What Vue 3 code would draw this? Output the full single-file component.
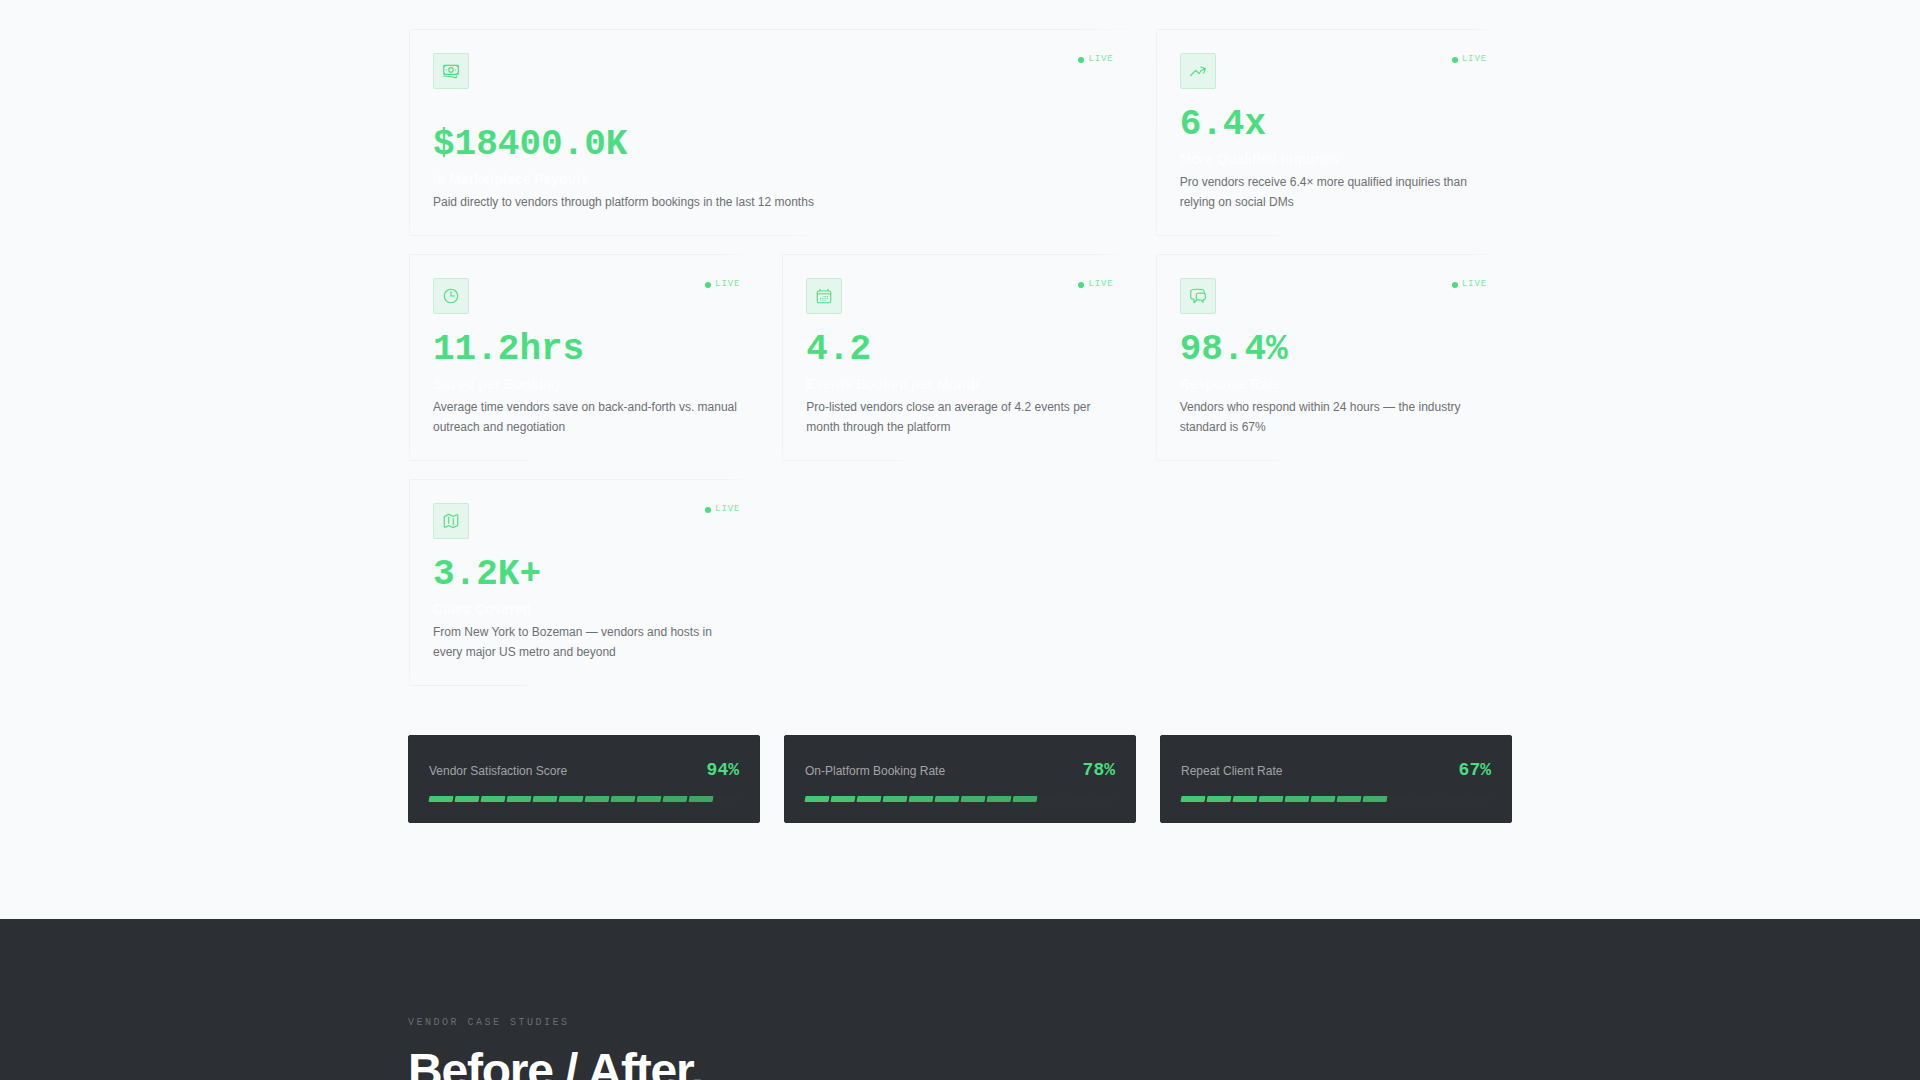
<script setup>
const metrics = [
  {
    value: '$18400.0K',
    title: 'in Marketplace Payouts',
    text: 'Paid directly to vendors through platform bookings in the last 12 months',
    wide: true,
    icon: 'M2.25 18.75a60.07 60.07 0 0 1 15.797 2.101c.727.198 1.453-.342 1.453-1.096V18.75M3.75 4.5v.75A.75.75 0 0 1 3 6h-.75m0 0v-.375c0-.621.504-1.125 1.125-1.125H20.25M2.25 6v9m18-10.5v.75c0 .414.336.75.75.75h.75m-1.5-1.5h.375c.621 0 1.125.504 1.125 1.125v9.75c0 .621-.504 1.125-1.125 1.125h-.375m1.5-1.5H21a.75.75 0 0 0-.75.75v.75m0 0H3.75m0 0h-.375a1.125 1.125 0 0 1-1.125-1.125V15m1.5 1.5v-.75A.75.75 0 0 0 3 15h-.75M15 10.5a3 3 0 1 1-6 0 3 3 0 0 1 6 0Zm3 0h.008v.008H18V10.5Zm-12 0h.008v.008H6V10.5Z',
  },
  {
    value: '6.4x',
    title: 'More Qualified Inquiries',
    text: 'Pro vendors receive 6.4× more qualified inquiries than relying on social DMs',
    icon: 'M2.25 18 9 11.25l4.306 4.306a11.95 11.95 0 0 1 5.814-5.518l2.74-1.22m0 0-5.94-2.281m5.94 2.28-2.28 5.941',
  },
  {
    value: '11.2hrs',
    title: 'Saved per Booking',
    text: 'Average time vendors save on back-and-forth vs. manual outreach and negotiation',
    icon: 'M12 6v6h4.5m4.5 0a9 9 0 1 1-18 0 9 9 0 0 1 18 0Z',
  },
  {
    value: '4.2',
    title: 'Events Booked per Month',
    text: 'Pro-listed vendors close an average of 4.2 events per month through the platform',
    icon: 'M6.75 3v2.25M17.25 3v2.25M3 18.75V7.5a2.25 2.25 0 0 1 2.25-2.25h13.5A2.25 2.25 0 0 1 21 7.5v11.25m-18 0A2.25 2.25 0 0 0 5.25 21h13.5A2.25 2.25 0 0 0 21 18.75m-18 0v-7.5A2.25 2.25 0 0 1 5.25 9h13.5A2.25 2.25 0 0 1 21 11.25v7.5m-9-6h.008v.008H12v-.008ZM12 15h.008v.008H12V15Zm0 2.25h.008v.008H12v-.008ZM9.75 15h.008v.008H9.75V15Zm0 2.25h.008v.008H9.75v-.008ZM7.5 15h.008v.008H7.5V15Zm0 2.25h.008v.008H7.5v-.008Zm6.75-4.5h.008v.008h-.008v-.008Zm0 2.25h.008v.008h-.008V15Zm0 2.25h.008v.008h-.008v-.008Zm2.25-4.5h.008v.008H16.5v-.008Zm0 2.25h.008v.008H16.5V15Z',
  },
  {
    value: '98.4%',
    title: 'Response Rate',
    text: 'Vendors who respond within 24 hours — the industry standard is 67%',
    icon: 'M20.25 8.511c.884.284 1.5 1.128 1.5 2.097v4.286c0 1.136-.847 2.1-1.98 2.193-.34.027-.68.052-1.02.072v3.091l-3-3c-1.354 0-2.694-.055-4.02-.163a2.115 2.115 0 0 1-.825-.242m9.345-8.334a2.126 2.126 0 0 0-.476-.095 48.64 48.64 0 0 0-8.048 0c-1.131.094-1.976 1.057-1.976 2.192v4.286c0 .837.46 1.58 1.155 1.951m9.345-8.334V6.637c0-1.621-1.152-3.026-2.76-3.235A48.455 48.455 0 0 0 11.25 3c-2.115 0-4.198.137-6.24.402-1.608.209-2.76 1.614-2.76 3.235v6.226c0 1.621 1.152 3.026 2.76 3.235.577.075 1.157.14 1.74.194V21l4.155-4.155',
  },
  {
    value: '3.2K+',
    title: 'Cities Covered',
    text: 'From New York to Bozeman — vendors and hosts in every major US metro and beyond',
    icon: 'M9 6.75V15m6-6v8.25m.503 3.498 4.875-2.437c.381-.19.622-.58.622-1.006V4.82c0-.836-.88-1.38-1.628-1.006l-3.869 1.934c-.317.159-.69.159-1.006 0L9.503 3.252a1.125 1.125 0 0 0-1.006 0L3.622 5.689C3.24 5.88 3 6.27 3 6.695V19.18c0 .836.88 1.38 1.628 1.006l3.869-1.934c.317-.159.69-.159 1.006 0l4.994 2.497c.317.158.69.158 1.006 0Z',
  },
]

const SEGMENTS = 12
const scores = [
  { label: 'Vendor Satisfaction Score', value: 94 },
  { label: 'On-Platform Booking Rate', value: 78 },
  { label: 'Repeat Client Rate', value: 67 },
]
const filled = (value) => Math.round((value / 100) * SEGMENTS)
const segmentOpacity = (n) => 0.87 - (n - 1) * 0.02
</script>

<template>
  <main>
    <section class="proof">
      <div class="container">
        <div class="metrics">
          <article v-for="m in metrics" :key="m.value" class="metric" :class="{ wide: m.wide }">
            <header class="metric-head">
              <span class="icon">
                <svg viewBox="0 0 24 24" aria-hidden="true"><path :d="m.icon" /></svg>
              </span>
              <span class="live"><i class="dot"></i><span class="live-text">LIVE</span></span>
            </header>
            <div>
              <p class="value">{{ m.value }}</p>
              <h3 class="title">{{ m.title }}</h3>
              <p class="text">{{ m.text }}</p>
            </div>
          </article>
        </div>

        <div class="scores">
          <article v-for="s in scores" :key="s.label" class="score">
            <div class="score-head">
              <span class="score-label">{{ s.label }}</span>
              <span class="score-value">{{ s.value }}%</span>
            </div>
            <div class="segments">
              <span
                v-for="n in SEGMENTS"
                :key="n"
                class="segment"
                :class="{ on: n <= filled(s.value) }"
                :style="n <= filled(s.value) ? { opacity: segmentOpacity(n) } : null"
              ></span>
            </div>
          </article>
        </div>
      </div>
    </section>

    <section class="cases">
      <div class="container">
        <p class="eyebrow">VENDOR CASE STUDIES</p>
        <h2 class="heading">Before / After.</h2>
      </div>
    </section>
  </main>
</template>

<style>
body {
  margin: 0;
  background: #f9fafb;
}
html {
  scrollbar-width: none;
}
</style>

<style scoped>
main {
  font-family: "Liberation Sans", Arial, sans-serif;
}
p,
h2,
h3 {
  margin: 0;
}
.container {
  max-width: 1104px;
  margin: 0 auto;
  padding: 0 24px;
}
.proof {
  padding: 28px 0 96px;
  background: #f9fafb;
}
.metrics {
  display: grid;
  grid-template-columns: repeat(3, 1fr);
  gap: 16px;
}
.metric {
  position: relative;
  display: flex;
  flex-direction: column;
  justify-content: space-between;
  gap: 18px;
  padding: 25px;
}
.metric::before {
  content: "";
  position: absolute;
  inset: 1px;
  border-radius: 2px;
  background:
    linear-gradient(90deg, #eff1f2 92%, transparent) 0 0 / 96% 1px no-repeat,
    linear-gradient(#eff1f2, #f2f4f5) 0 0 / 1px 100% no-repeat,
    linear-gradient(90deg, #eff1f2 92%, transparent) 0 100% / 35% 1px no-repeat;
  pointer-events: none;
}
.metric.wide {
  grid-column: span 2;
}
.metric.wide::before {
  background-size: 100% 1px, 1px 100%, 56% 1px;
}
.metric-head {
  display: flex;
  justify-content: space-between;
  align-items: flex-start;
}
.icon {
  display: flex;
  align-items: center;
  justify-content: center;
  box-sizing: border-box;
  width: 36px;
  height: 36px;
  border: 1px solid #c6eed6;
  border-radius: 2px;
  background: #e5f6ec;
}
.icon svg {
  width: 18px;
  height: 18px;
  fill: none;
  stroke: #4ade80;
  stroke-width: 1.5;
  stroke-linecap: round;
  stroke-linejoin: round;
}
.live {
  display: flex;
  align-items: flex-end;
  gap: 4px;
  height: 10px;
  font: 9px/8px "Liberation Mono", monospace;
  letter-spacing: 0.1em;
  color: #4ade80;
}
.live-text {
  opacity: 0.7;
}
.dot {
  width: 6px;
  height: 6px;
  border-radius: 50%;
  background: #4ade80;
}
.value {
  margin-bottom: 6px;
  font: bold 36px/36px "Liberation Mono", monospace;
  color: #4ade80;
}
.title {
  margin-bottom: 3px;
  font-size: 14px;
  line-height: 20px;
  font-weight: bold;
  color: #fdfefe;
}
.text {
  font-size: 12px;
  line-height: 20px;
  color: #6b7073;
}
.scores {
  display: grid;
  grid-template-columns: repeat(3, 1fr);
  gap: 24px;
  margin-top: 48px;
}
.score {
  padding: 20px;
  border: 1px solid #292e31;
  border-radius: 2px;
  background: #2c2f33;
}
.score-head {
  display: flex;
  justify-content: space-between;
  align-items: baseline;
  height: 28px;
  margin-bottom: 12px;
  line-height: 28px;
}
.score-label {
  font-size: 12px;
  color: #a3a5a7;
}
.score-value {
  font-family: "Liberation Mono", monospace;
  font-size: 18px;
  font-weight: bold;
  color: #4ade80;
}
.segments {
  display: flex;
  gap: 2px;
}
.segment {
  flex: 1;
  height: 6px;
  border-radius: 1px;
  background: #2e3134;
  transform: skewX(-10deg);
}
.segment.on {
  background: #4ade80;
}
.cases {
  padding: 96px 0;
  background: #2c2f33;
}
.eyebrow {
  margin-bottom: 16px;
  font: 10px/16px "Liberation Mono", monospace;
  letter-spacing: 0.25em;
  color: #6b6e71;
}
.heading {
  font-size: 48px;
  line-height: 48px;
  font-weight: bold;
  letter-spacing: -0.025em;
  color: #fff;
}
</style>
